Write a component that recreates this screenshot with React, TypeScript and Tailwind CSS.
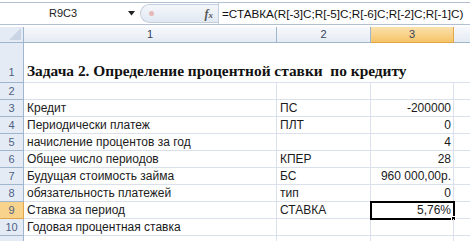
import React from "react";

const rows: { n: number; a: string; b: string; c: string }[] = [
  { n: 2, a: "", b: "", c: "" },
  { n: 3, a: "Кредит", b: "ПС", c: "-200000" },
  { n: 4, a: "Периодически платеж", b: "ПЛТ", c: "0" },
  { n: 5, a: "начисление процентов за год", b: "", c: "4" },
  { n: 6, a: "Общее число периодов", b: "КПЕР", c: "28" },
  { n: 7, a: "Будущая стоимость займа", b: "БС", c: "960 000,00р." },
  { n: 8, a: "обязательность платежей", b: "тип", c: "0" },
  { n: 9, a: "Ставка за период", b: "СТАВКА", c: "5,76%" },
  { n: 10, a: "Годовая процентная ставка", b: "", c: "" },
  { n: 11, a: "", b: "", c: "" },
];

export default function App() {
  return (
    <div
      className="w-[470px] h-[241px] overflow-hidden bg-white text-[#1b1b1b]"
      style={{ fontFamily: '"Liberation Sans", Arial, sans-serif' }}
    >
      {/* formula bar */}
      <div className="mt-[2px] h-[23px] border-t border-b border-[#b3c0d2] flex items-center bg-white">
        <div className="w-[140px] h-full flex items-center relative">
          <span className="w-[126px] text-center text-[11px] text-[#222]">R9C3</span>
          <svg width="7" height="5" viewBox="0 0 7 5" className="ml-[2px]">
            <path d="M0 0 L7 0 L3.5 4.5 Z" fill="#222" />
          </svg>
        </div>
        <div className="w-[78px] h-[19px] rounded-l-full border border-r-0 border-[#c4cfdd] bg-gradient-to-b from-[#f4f7fb] to-[#e2e9f3] flex items-center">
          <span className="ml-[8px] w-[5px] h-[5px] rounded-full bg-[#e7b8b8]" />
          <span
            className="ml-auto mr-[5px] text-[12px] italic font-bold text-[#555]"
            style={{ fontFamily: '"Liberation Serif", serif' }}
          >
            f<span className="text-[9px]">x</span>
          </span>
        </div>
        <div className="h-full border-l border-[#c4cfdd]" />
        <span className="ml-[3px] text-[11.7px] whitespace-nowrap text-[#111]">
          =СТАВКА(R[-3]C;R[-5]C;R[-6]C;R[-2]C;R[-1]C)
        </span>
      </div>

      {/* grid */}
      <div className="mt-[2px] grid grid-cols-[24px_253px_94px_83px_16px] text-[12px]">
        {/* header row */}
        <div className="h-[16px] bg-[#e4ebf5] border-r border-b border-[#9eb6ce] relative">
          <svg width="12" height="12" viewBox="0 0 12 12" className="absolute right-[2px] bottom-[2px]">
            <path d="M12 0 L12 12 L0 12 Z" fill="#c9d5e4" />
          </svg>
        </div>
        <div className="h-[16px] bg-gradient-to-b from-[#f7f9fc] to-[#e5ebf3] border-r border-b border-[#9eb6ce] flex items-center justify-center text-[#34435a] text-[11px]">1</div>
        <div className="h-[16px] bg-gradient-to-b from-[#f7f9fc] to-[#e5ebf3] border-r border-b border-[#9eb6ce] flex items-center justify-center text-[#34435a] text-[11px]">2</div>
        <div className="h-[16px] bg-gradient-to-b from-[#fbe1ad] to-[#f5c466] border-r border-b border-[#e2a54a] flex items-center justify-center text-[#34435a] text-[11px]">3</div>
        <div className="h-[16px] bg-gradient-to-b from-[#f7f9fc] to-[#e5ebf3] border-b border-[#9eb6ce]" />

        {/* row 1 */}
        <div className="h-[40px] bg-[#e4ebf5] border-r border-b border-[#9eb6ce] flex items-end justify-center pb-[2px] text-[#4d6185] text-[11px]">1</div>
        <div className="h-[40px] border-b border-[#dae1ec] relative col-span-3">
          <span
            className="absolute left-[3px] bottom-0 whitespace-pre font-bold text-[15.4px] text-[#111]"
            style={{ fontFamily: '"Liberation Serif", "Times New Roman", serif' }}
          >
            Задача 2. Определение процентной ставки  по кредиту
          </span>
        </div>
        <div className="h-[40px] border-b border-[#dae1ec]" />

        {rows.map((r) => {
          const sel = r.n === 9;
          return (
            <React.Fragment key={r.n}>
              <div
                className={
                  "h-[17px] border-r border-b flex items-center justify-center text-[11px] " +
                  (sel
                    ? "bg-[#f8d38c] border-[#e2a54a] text-[#4d6185]"
                    : "bg-[#e4ebf5] border-[#9eb6ce] text-[#4d6185]")
                }
              >
                {r.n <= 10 ? r.n : ""}
              </div>
              <div className="h-[17px] border-r border-b border-[#dae1ec] flex items-center px-[3px] whitespace-nowrap">
                {r.a}
              </div>
              <div className="h-[17px] border-r border-b border-[#dae1ec] flex items-center px-[3px] whitespace-nowrap">
                {r.b}
              </div>
              <div
                className={
                  "h-[17px] border-r border-b border-[#dae1ec] flex items-center justify-end px-[2px] whitespace-nowrap relative " +
                  (sel ? "outline-2 outline-black -outline-offset-1" : "")
                }
              >
                {r.c}
                {sel && (
                  <span className="absolute right-[-3px] bottom-[-3px] w-[5px] h-[5px] bg-black border border-white" />
                )}
              </div>
              <div className="h-[17px] border-b border-[#dae1ec]" />
            </React.Fragment>
          );
        })}
      </div>
    </div>
  );
}
